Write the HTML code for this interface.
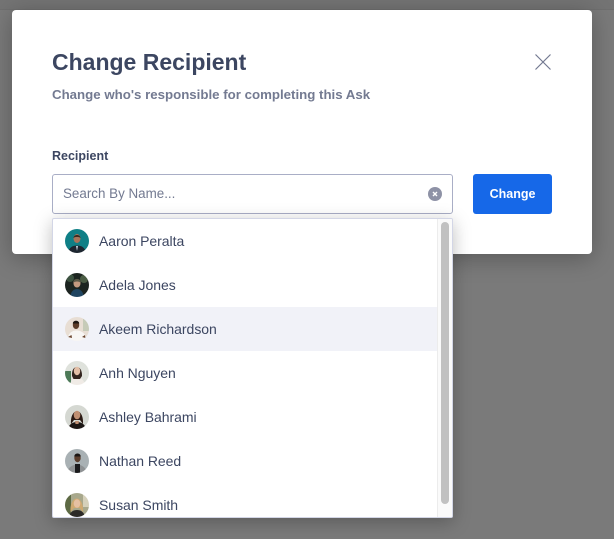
<!DOCTYPE html>
<html>
<head>
<meta charset="utf-8">
<style>
html,body{margin:0;padding:0;width:614px;height:539px;overflow:hidden;background:#7a7a7a;font-family:"Liberation Sans",sans-serif;}
.abs{position:absolute;}
#top{left:0;top:0;width:614px;height:9px;background:#747474;border-bottom:1px solid #6f6f6f;}
#modal{left:12px;top:10px;width:580px;height:244px;background:#fff;border-radius:4px;box-shadow:0 4px 24px rgba(0,0,0,.28);}
.t{position:absolute;white-space:nowrap;}
#title{left:52px;top:48px;font-size:23px;line-height:29px;font-weight:bold;color:#3c4661;}
#sub{left:52px;top:86px;font-size:13.28px;line-height:18px;font-weight:bold;color:#737a91;}
#lab{left:52px;top:148px;font-size:12.5px;line-height:16px;font-weight:bold;color:#3c4661;}
#input{left:52px;top:174px;width:399px;height:38px;border:1px solid #a9aec6;border-radius:3px;background:#fff;}
#ph{left:63px;top:185px;font-size:13.4px;line-height:18px;color:#737a91;}
#btn{left:473px;top:174px;width:79px;height:40px;background:#1668e8;border-radius:3px;color:#fff;font-size:12.5px;font-weight:bold;line-height:40px;text-align:center;}
#list{left:52px;top:218px;width:399px;height:298px;border:1px solid #d3d6e6;background:#fff;border-radius:2px;box-shadow:0 4px 18px rgba(0,0,0,.26);overflow:hidden;}
#hl{left:0;top:88px;width:384px;height:44px;background:#f1f2f8;position:absolute;}
#track{position:absolute;left:384px;top:0;width:15px;height:298px;background:#fafafa;border-left:1px solid #ececec;box-sizing:border-box;}
#thumb{position:absolute;left:388px;top:3px;width:8px;height:282px;border-radius:4px;background:#c1c1c1;}
.n{position:absolute;left:46px;font-size:14px;line-height:18px;color:#3c4661;white-space:nowrap;letter-spacing:-.03px;}
.av{position:absolute;left:12px;width:24px;height:24px;}
.av g{filter:blur(.35px);}
</style>
</head>
<body>
<div class="abs" id="top"></div>
<div class="abs" id="modal"></div>
<div class="t" id="title">Change Recipient</div>
<div class="t" id="sub">Change who's responsible for completing this Ask</div>
<svg class="abs" style="left:534px;top:53px" width="18" height="18" viewBox="0 0 18 18"><path d="M1.500 1.500L16.500 16.500M16.500 1.500L1.500 16.500" stroke="#737a91" stroke-width="1.200" fill="none"/></svg>
<div class="t" id="lab">Recipient</div>
<div class="abs" id="input"></div>
<div class="t" id="ph">Search By Name...</div>
<svg class="abs" style="left:428px;top:187px" width="14" height="14" viewBox="0 0 14 14"><circle cx="7" cy="7" r="7" fill="#8e92a6"/><path d="M5 5L9 9M9 5L5 9" stroke="#fff" stroke-width="1.400"/></svg>
<div class="abs" id="btn">Change</div>
<div class="abs" id="list">
  <div id="hl"></div>
  <div id="track"></div>
  <div id="thumb"></div>

  <svg class="av" style="top:10px" viewBox="0 0 24 24"><defs><clipPath id="c"><circle cx="12" cy="12" r="12"/></clipPath></defs><g clip-path="url(#c)"><rect width="24" height="24" fill="#0f7f86"/><path d="M3 24C4 18 8 16.500 12 16.500S20 18 21 24Z" fill="#1d2630"/><path d="M11 17L12 22L13 17Z" fill="#c9d4de"/><ellipse cx="12" cy="9.500" rx="3.500" ry="4.500" fill="#a8745a"/><path d="M8.500 9C8.500 5 15.500 5 15.500 9C14 7.500 10 7.500 8.500 9Z" fill="#3a2a20"/></g></svg>
  <div class="n" style="top:13px">Aaron Peralta</div>

  <svg class="av" style="top:54px" viewBox="0 0 24 24"><g clip-path="url(#c)"><rect width="24" height="24" fill="#1c2420"/><circle cx="5" cy="5" r="4" fill="#3c5240"/><circle cx="19" cy="6" r="4" fill="#4a5c44"/><path d="M5 24C6 18 9 16 12 16S18 18 19 24Z" fill="#1f4460"/><ellipse cx="12" cy="10.500" rx="3.500" ry="4" fill="#c49a80"/><path d="M8 10C8 4.500 16 4.500 16 10C14 8 10 8 8 10Z" fill="#5c5a48"/></g></svg>
  <div class="n" style="top:57px">Adela Jones</div>

  <svg class="av" style="top:98px" viewBox="0 0 24 24"><g clip-path="url(#c)"><rect width="24" height="24" fill="#e8ded4"/><rect x="18" y="2" width="6" height="12" fill="#c6cbb8"/><path d="M2 24C3 16 7 13.500 11.500 13.500S21 16 22 24Z" fill="#f8f6f4"/><path d="M3 20L6.500 18L7 21Z" fill="#6b4630"/><path d="M17 20L20 18L20.500 21Z" fill="#6b4630"/><ellipse cx="11" cy="8" rx="3.200" ry="4" fill="#5b3b28"/><path d="M7.800 6.500C7.800 2.800 14.200 2.800 14.200 6.500Z" fill="#1e1712"/></g></svg>
  <div class="n" style="top:101px">Akeem Richardson</div>

  <svg class="av" style="top:142px" viewBox="0 0 24 24"><g clip-path="url(#c)"><rect width="24" height="24" fill="#dfe2dc"/><rect x="0" y="10" width="6" height="14" fill="#4d7a58"/><path d="M5 24C6 18 9 16 12 16S19 18 20 24Z" fill="#f0ebe6"/><path d="M7 15C6 3 17.500 3 17 15L15 18H8.500Z" fill="#32241e"/><ellipse cx="12" cy="10" rx="3.200" ry="4.200" fill="#e2bea6"/></g></svg>
  <div class="n" style="top:145px">Anh Nguyen</div>

  <svg class="av" style="top:186px" viewBox="0 0 24 24"><g clip-path="url(#c)"><rect width="24" height="24" fill="#d5d8d2"/><path d="M3 24C4 19 8 17 12 17S20 19 21 24Z" fill="#1c1614"/><path d="M6 19C5 2 19 2 18 19L15 15H9Z" fill="#2b1a14"/><ellipse cx="12" cy="10" rx="3.300" ry="4.300" fill="#c08f72"/><path d="M10 16H14L13.500 19H10.500Z" fill="#c08f72"/></g></svg>
  <div class="n" style="top:189px">Ashley Bahrami</div>

  <svg class="av" style="top:230px" viewBox="0 0 24 24"><g clip-path="url(#c)"><rect width="24" height="24" fill="#a9b1b4"/><path d="M2 24C3 18 8 15.500 12 15.500S21 18 22 24Z" fill="#8f9294"/><path d="M10 15H15L15 24H10Z" fill="#1a1a1c"/><ellipse cx="12.500" cy="9" rx="3.200" ry="4.200" fill="#5b3d2c"/><path d="M9.300 7.500C9.300 3.500 15.700 3.500 15.700 7.500Z" fill="#1b1512"/></g></svg>
  <div class="n" style="top:233px">Nathan Reed</div>

  <svg class="av" style="top:274px" viewBox="0 0 24 24"><g clip-path="url(#c)"><rect width="24" height="24" fill="#a8a88c"/><rect x="0" y="0" width="6" height="24" fill="#5d6a44"/><rect x="18" y="0" width="6" height="14" fill="#d5d0ba"/><path d="M4 24C5 19 8 17 12 17S19 19 20 24Z" fill="#2c2a28"/><path d="M5.500 19C4.500 1 19 1 18 19L14.500 15H9Z" fill="#cfa970"/><ellipse cx="12" cy="10.500" rx="3.300" ry="4.300" fill="#e6c0a2"/></g></svg>
  <div class="n" style="top:277px">Susan Smith</div>
</div>
</body>
</html>
